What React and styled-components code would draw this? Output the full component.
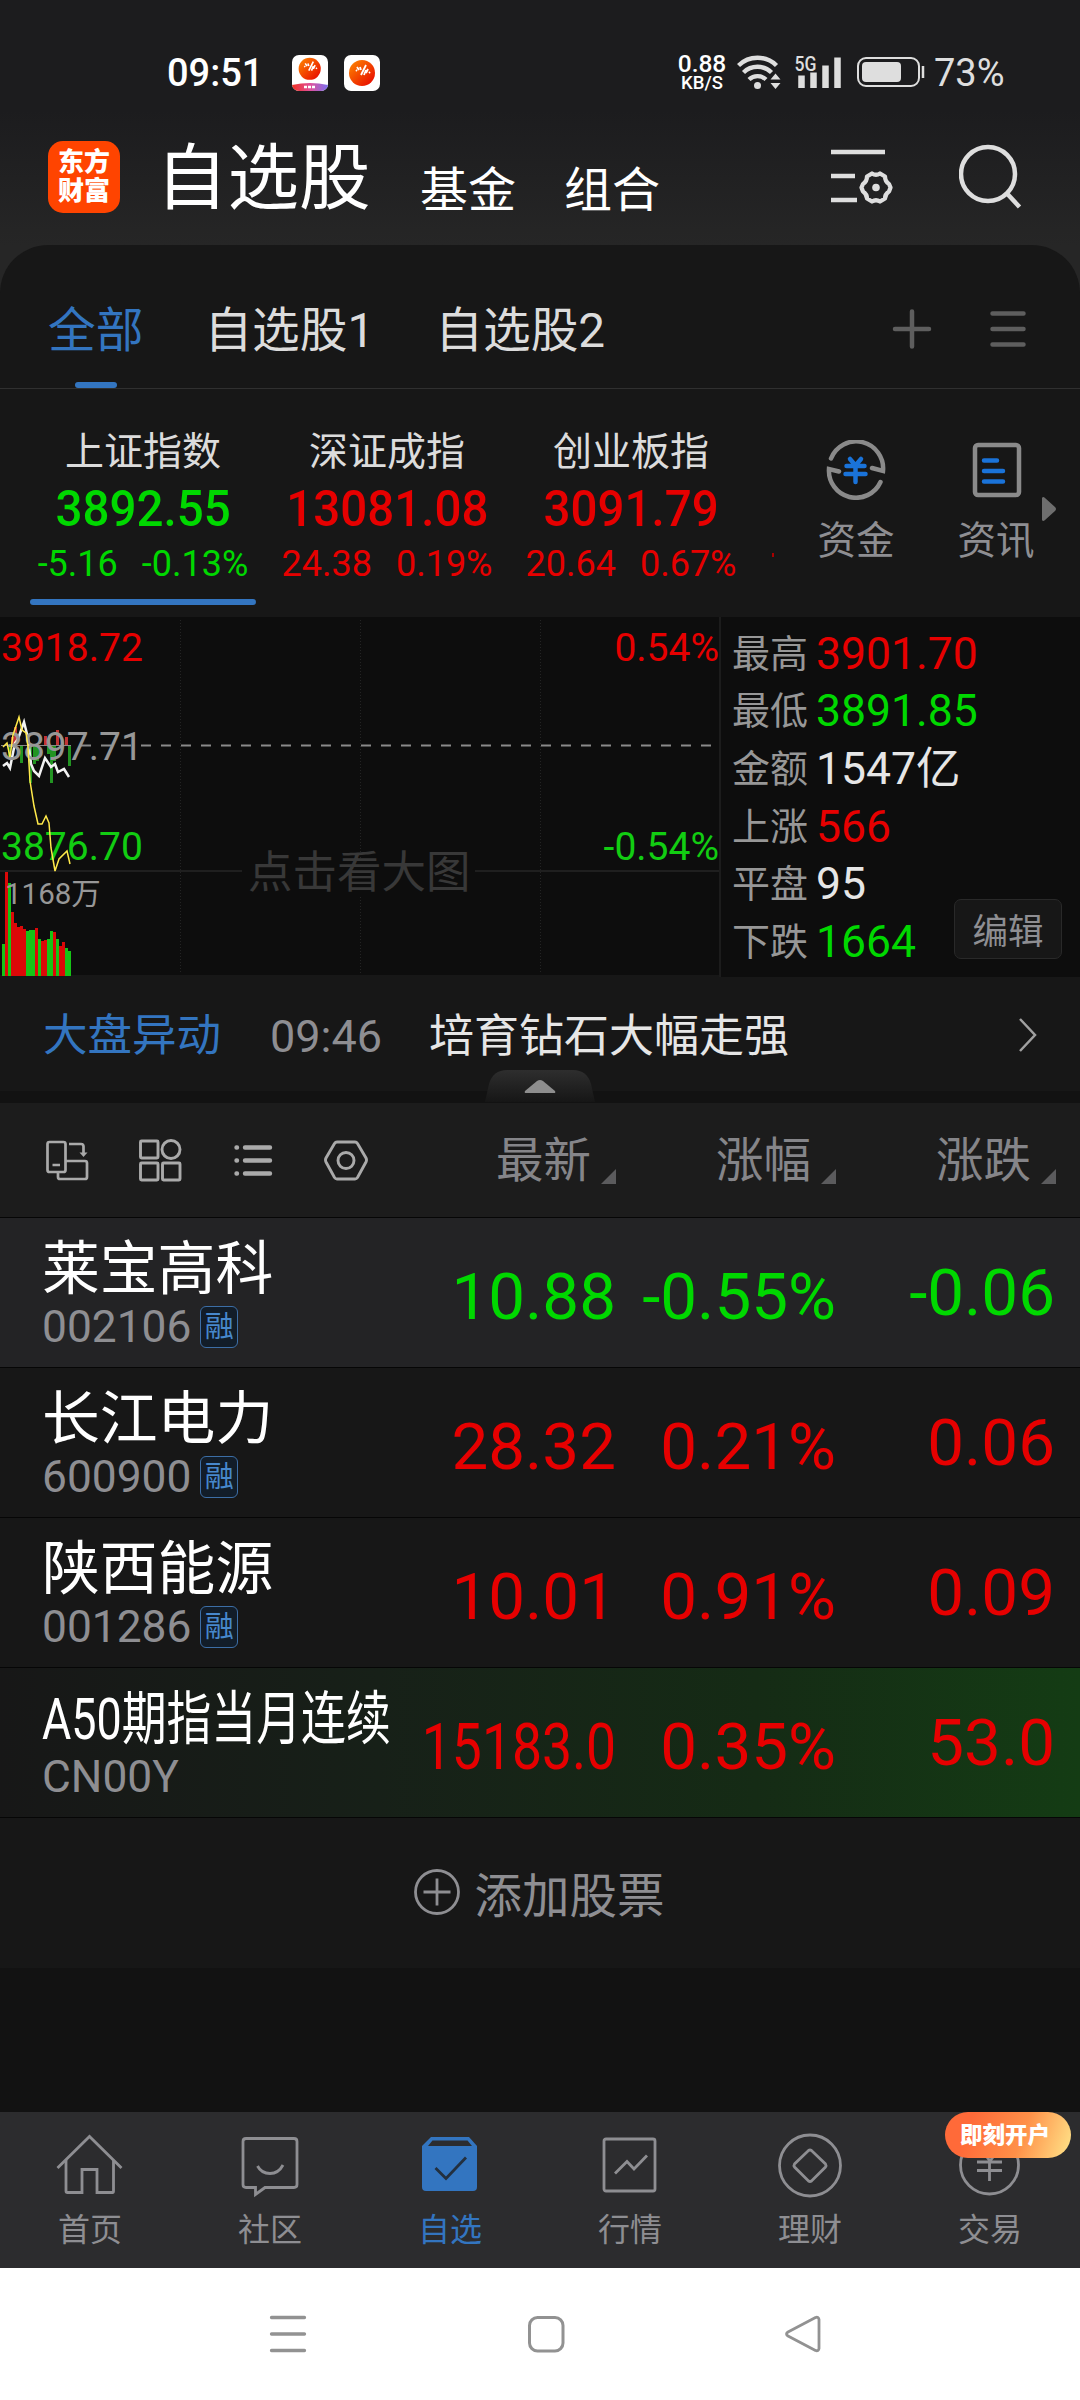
import React from 'react';
import styled, { createGlobalStyle } from 'styled-components';

const RED = '#e60000';
const GREEN = '#00d800';
const BLUE = '#3375c0';
const GREY = '#8e8e92';

const GlobalStyle = createGlobalStyle`
  * {
    box-sizing: border-box;
  }
  body {
    margin: 0;
    background: #121212;
    font-family: Roboto, 'Noto Sans CJK SC', sans-serif;
  }
  svg {
    display: block;
    flex: none;
  }
`;

const Screen = styled.div`
  width: 1080px;
  height: 2400px;
  display: flex;
  flex-direction: column;
  overflow: hidden;
  background: #121212;
  white-space: nowrap;
`;

// Header
const Top = styled.div`
  height: 292px;
  margin-bottom: -47px;
  flex: none;
  background: linear-gradient(#1c1c1e 110px, #262626 245px);
`;

const StatusBar = styled.div`
  height: 110px;
  padding: 35px 73px 0 167px;
  display: flex;
  align-items: center;
  color: #fff;
`;

const Clock = styled.div`
  width: 125px;
  font-size: 38px;
  font-weight: 500;
`;

const Badges = styled.div`
  display: flex;
  gap: 16px;
`;

const NetSpeed = styled.div`
  margin: 0 9px 0 auto;
  width: 52px;
  display: flex;
  flex-direction: column;
  align-items: center;
  font-size: 24.5px;
  line-height: 20px;
  font-weight: 500;

  small {
    font-size: 18.5px;
    line-height: 18px;
  }
`;

const Battery = styled.div`
  margin-left: 8px;
  width: 73px;
  font-size: 38px;
  color: #dedede;
`;

const TitleBar = styled.div`
  height: 135px;
  padding: 0 57px 0 48px;
  display: flex;
  align-items: center;
`;

const Logo = styled.div`
  width: 72px;
  height: 72px;
  margin-top: -1px;
  border-radius: 15px;
  background: #ff4400;
  color: #fff;
  font-size: 26px;
  line-height: 29px;
  font-weight: 900;
  text-align: center;
  padding-top: 7px;
`;

const Title = styled.div`
  margin: 3px 0 0 36px;
  width: 217px;
  color: #fff;
  font-size: 71.5px;
  line-height: 80px;
`;

const TitleLink = styled.div`
  margin: 26px 0 0 47px;
  width: 97px;
  color: #fff;
  font-size: 48px;
  line-height: 56px;
`;

const TitleIcons = styled.div`
  display: flex;
  align-items: flex-end;
  gap: 65px;
  margin: -1px 0 0 auto;
`;

// Watchlist groups
const Panel = styled.div`
  height: 372px;
  flex: none;
  border-radius: 48px 48px 0 0;
  background: #171717;
`;

const GroupTabs = styled.div`
  height: 144px;
  padding: 0 54px 0 48px;
  display: flex;
  align-items: center;
  border-bottom: 1px solid #303030;
`;

const GroupTab = styled.div`
  position: relative;
  height: 143px;
  margin-right: 61px;
  font-size: 47.7px;
  line-height: 173px;
  color: ${(p) => (p.$active ? BLUE : '#dcdcdc')};

  &::after {
    content: '';
    display: ${(p) => (p.$active ? 'block' : 'none')};
    position: absolute;
    left: 27px;
    bottom: 0;
    width: 42px;
    height: 6px;
    border-radius: 3px;
    background: ${BLUE};
  }
`;

const GroupActions = styled.div`
  display: flex;
  align-items: center;
  gap: 58px;
  margin: 24px 0 0 auto;
`;

// Index strip
const IndexStrip = styled.div`
  height: 228px;
  padding-left: 21px;
  display: flex;
`;

const IndexCell = styled.div`
  position: relative;
  width: 244px;
  padding-top: 36px;
  display: flex;
  flex-direction: column;
  align-items: center;
  color: ${(p) => p.$color};

  &::after {
    content: '';
    display: ${(p) => (p.$active ? 'block' : 'none')};
    position: absolute;
    left: 9px;
    bottom: 12px;
    width: 226px;
    height: 6px;
    border-radius: 3px;
    background: ${BLUE};
  }
`;

const IndexName = styled.div`
  color: #dcdcdc;
  font-size: 39px;
  line-height: 54px;
`;

const IndexValue = styled.div`
  font-size: 50px;
  line-height: 60px;
  font-weight: 500;
  transform: scaleX(0.95);
`;

const IndexChange = styled.div`
  display: flex;
  gap: 24px;
  font-size: 36px;
  line-height: 51px;
`;

const Peek = styled.div`
  width: 2px;
  height: 4px;
  margin: 164px 0 0 19px;
  background: #a00;
`;

const Shortcut = styled.div`
  width: 140px;
  padding-top: 51px;
  display: flex;
  flex-direction: column;
  align-items: center;
  gap: 15px;
  color: ${GREY};
  font-size: 38.5px;
  line-height: 52px;
`;

const Shortcuts = styled.div`
  display: flex;
  margin-left: 12px;
`;

const MoreArrow = styled.div`
  margin: 107px 0 0 -25px;
`;

// Minute chart
const ChartRow = styled.div`
  height: 360px;
  flex: none;
  display: flex;
  background: #0d0d0d;
`;

const Stats = styled.div`
  position: relative;
  flex: 1;
  padding: 8px 0 0 11px;
  border-left: 2px solid #1c1c1c;
`;

const Stat = styled.div`
  height: 57.6px;
  display: flex;
  align-items: center;
  color: ${(p) => p.$color};
  font-size: 44.5px;
  line-height: 56px;

  span {
    width: 84px;
    font-size: 38px;
    color: #979797;
  }
`;

const EditButton = styled.button`
  position: absolute;
  right: 18px;
  bottom: 18px;
  width: 108px;
  height: 60px;
  padding: 0 0 2px;
  border: 1px solid #292929;
  border-radius: 7px;
  background: #171717;
  color: ${GREY};
  font: inherit;
  font-size: 35.5px;
`;

// News ticker
const Ticker = styled.div`
  position: relative;
  height: 126px;
  flex: none;
  padding: 0 43px;
  display: flex;
  background: #171717;
  border-bottom: 12px solid #121212;
  font-size: 45px;
  line-height: 119px;
`;

const TickerLabel = styled.div`
  width: 227px;
  font-size: 44.5px;
  color: ${BLUE};
`;

const TickerTime = styled.div`
  width: 159px;
  color: ${GREY};
`;

const TickerText = styled.div`
  color: #e6e6e6;
`;

const TickerArrow = styled.div`
  margin: 41px 0 0 auto;
`;

const Handle = styled.div`
  position: absolute;
  left: 485px;
  bottom: -11px;
`;

// Quote list
const ListHead = styled.div`
  height: 114px;
  flex: none;
  display: grid;
  grid-template-columns: 396px 220px 220px 220px;
  align-items: center;
  background: #1c1c1c;
`;

const Tools = styled.div`
  display: flex;
  gap: 49px;
  padding-left: 45px;
`;

const ColumnTitle = styled.div`
  display: flex;
  justify-content: flex-end;
  align-items: flex-end;
  gap: 10px;
  padding-top: 2px;
  font-size: 47.5px;
  line-height: 60px;
  color: #858589;

  svg {
    margin-bottom: 7px;
  }
`;

const Row = styled.div`
  height: 150px;
  flex: none;
  padding-left: 42px;
  display: grid;
  grid-template-columns: 354px 220px 220px 219px;
  border-top: 1px solid #060606;
  background: ${(p) => p.$background || '#171717'};
`;

const Name = styled.div`
  margin-top: 13px;
  color: #fff;
  font-size: 57.8px;
  line-height: 76px;
  transform: scaleX(${(p) => p.$squeeze || 1});
  transform-origin: left;
`;

const Code = styled.div`
  display: flex;
  align-items: center;
  gap: 9px;
  margin-top: -4px;
  height: 48px;
  color: ${GREY};
  font-size: 44.3px;
`;

const Tag = styled.div`
  width: 38px;
  height: 42px;
  border: 1px solid #3c6ea6;
  border-radius: 6px;
  background: #121d29;
  color: #4788cc;
  font-size: 29px;
  line-height: 41px;
  text-align: center;
`;

const Figure = styled.div`
  justify-self: end;
  padding-top: ${(p) => p.$top || 39}px;
  color: ${(p) => p.$color};
  font-size: 65.5px;
  line-height: 80px;
  transform: scaleX(${(p) => p.$squeeze || 1});
  transform-origin: right;
`;

const AddRow = styled.div`
  height: 151px;
  flex: none;
  display: flex;
  align-items: center;
  justify-content: center;
  gap: 15px;
  padding: 0 2px 2px 0;
  border-top: 1px solid #060606;
  background: #171717;
  color: ${GREY};
  font-size: 47.5px;
`;

// Bottom bars
const TabBar = styled.div`
  height: 156px;
  flex: none;
  margin-top: auto;
  display: grid;
  grid-template-columns: repeat(6, 180px);
  background: #2c2c2e;
`;

const TabItem = styled.div`
  position: relative;
  padding-top: 20px;
  display: flex;
  flex-direction: column;
  align-items: center;
  color: ${(p) => (p.$active ? BLUE : GREY)};
  font-size: 32px;
  line-height: 44px;
  gap: 10px;
`;

const Promo = styled.div`
  position: absolute;
  top: 0;
  left: 45px;
  width: 126px;
  height: 46px;
  padding-left: 15px;
  border-radius: 23px;
  background: linear-gradient(110deg, #ff6a39 20%, #ff9048 60%, #ffe58a);
  color: #fff;
  font-size: 22.5px;
  line-height: 47px;
  font-weight: 900;
`;

const SystemBar = styled.div`
  height: 132px;
  flex: none;
  padding: 0 258px;
  display: flex;
  align-items: center;
  justify-content: space-between;
  background: #fff;
`;

const AppBadge = ({ promo }) => (
  <svg width="36" height="36" viewBox="0 0 36 36">
    <defs>
      <linearGradient id="ball" x1="0" y1="0" x2="1" y2="1">
        <stop offset="0" stopColor="#ff8a00" />
        <stop offset="1" stopColor="#e60000" />
      </linearGradient>
      <linearGradient id="strip">
        <stop offset="0" stopColor="#f03020" />
        <stop offset="0.5" stopColor="#e0509a" />
        <stop offset="1" stopColor="#7a70f0" />
      </linearGradient>
      <clipPath id="tile">
        <rect width="36" height="36" rx="7" />
      </clipPath>
    </defs>
    <rect width="36" height="36" rx="7" fill="#fff" />
    {promo && <path d="M0 30q18-4 36 0v6H0z" fill="url(#strip)" clipPath="url(#tile)" />}
    {promo && <path d="M12 32h12" stroke="#fff" strokeWidth="2.5" strokeDasharray="3 1" />}
    <g transform={promo ? 'translate(1.5 -1.5) scale(.9)' : 'translate(0 1)'}>
      <circle cx="18" cy="17" r={promo ? 12.3 : 13} fill="url(#ball)" />
      <path d="M13 11l2 3M16 11l1 3M17 19l5-10M22 17l2-4M12 14l1 1M25 17l1-1M20 19l2-5" stroke="#fff" strokeWidth="1.8" />
    </g>
  </svg>
);

const SignalIcons = () => (
  <svg width="189" height="46" viewBox="0 -4 189 46" fill="none" stroke="#dedede">
    <g strokeWidth="4.4">
      <path d="M1.5 11.5a27 27 0 0 1 38 0" />
      <path d="M6.5 18.5a20 20 0 0 1 28 0" />
      <path d="M12 25.5a12.5 12.5 0 0 1 17 0" />
    </g>
    <circle cx="20.5" cy="31.5" r="3.5" fill="#dedede" stroke="none" />
    <path d="M33.5 25.5l5-6 5 6zM33.5 29l5 6 5-6z" fill="#dedede" stroke="none" />
    <path d="M64.5 34V21.5M76.5 34V18.5M88.5 34V11.5M100.5 34V3.5" strokeWidth="6.5" />
    <text x="57.5" y="16.5" fill="#dedede" stroke="none" fontSize="20.5" fontWeight="500" textLength="22" lengthAdjust="spacingAndGlyphs">5G</text>
    <rect x="121" y="4" width="61" height="28" rx="8" strokeWidth="2" />
    <rect x="125" y="8" width="39" height="20" rx="4" fill="#dedede" stroke="none" />
    <path d="M186 12v12" strokeWidth="2.5" />
  </svg>
);

const FilterIcon = () => (
  <svg width="63" height="62" viewBox="0 0 63 62" fill="none" stroke="#dedede" strokeWidth="4.5">
    <path d="M0 4h54M0 28h24M0 52h26" />
    <path d="M41 25.5q4 2.5 8 0l5 3q0 5 4 7.5l1.5 3.5-1.5 4q-4 2.5-4 7l-5 3q-4-2.5-8 0l-5-3q0-4.500-4-7l-1.5-4 1.5-3.5q4-2.5 4-7.5z" strokeLinejoin="round" strokeWidth="4.3" />
    <circle cx="45" cy="39.5" r="3.8" fill="#dedede" stroke="none" />
  </svg>
);

const SearchIcon = () => (
  <svg width="64" height="66" viewBox="0 0 64 66" fill="none" stroke="#dedede" strokeWidth="4.5">
    <circle cx="29" cy="30" r="27" />
    <path d="M48 49.5l12.5 13.5" />
  </svg>
);

const FundIcon = () => (
  <svg width="60" height="60" viewBox="0 0 60 60" fill="none" stroke="#8a8a8a" strokeWidth="4.5" strokeLinecap="round">
    <path d="M5 18.5A27 27 0 0 1 57 31l-11-3" />
    <path d="M54.5 42A27 27 0 0 1 3 29l10 2.5" />
    <path d="M24 19l5.5 6.5L35 19M20.5 26h18M19.5 34h20M29.5 26v16" stroke="#1a73d9" />
  </svg>
);

const NewsIcon = () => (
  <svg width="60" height="60" viewBox="0 0 60 60" fill="none" stroke="#8a8a8a" strokeWidth="4.5" strokeLinecap="round">
    <rect x="9" y="5" width="44" height="50" rx="3" />
    <path d="M18 20.5h13M18 31h19M18 41.5h19" stroke="#1a73d9" />
  </svg>
);

// [height, colour] per minute, drawn upwards from the bottom edge
const VOLUMES = [
  [32, 'g'], [104, 'r'], [93, 'g'], [64, 'r'], [53, 'r'], [49, 'r'], [50, 'r'], [47, 'r'],
  [45, 'g'], [46, 'g'], [46, 'g'], [48, 'r'], [37, 'g'], [35, 'r'], [36, 'r'], [37, 'g'],
  [45, 'g'], [44, 'r'], [37, 'g'], [30, 'r'], [34, 'r'], [28, 'g'], [25, 'g'],
];

const MinuteChart = () => (
  <svg width="719" height="360" viewBox="0 0 719 360" fontFamily="Roboto, 'Noto Sans CJK SC', sans-serif" fontSize="39">
    <path d="M180.5 3v354M360.5 3v241M360.5 280v77M540.5 3v354" stroke="#242424" strokeDasharray="1 2" />
    <path d="M0 254h242M475 254h244" stroke="#1f1f1f" strokeWidth="2" />
    <path d="M0 359h719" stroke="#171717" strokeWidth="2" />
    <path d="M81 128.5h636" stroke="#8a8a8a" strokeWidth="2" strokeDasharray="10 10" />
    <path d="M12.5 128v-8M15.5 128v-18M45.5 128v-9M57.5 128v-15M66.5 128v-8" stroke="#c33434" strokeWidth="3" />
    <path d="M9.5 128v14M21.5 128v18M30.5 128v38M34.5 128v19M37.5 128v16M48.5 128v9M51.5 128v38M54.5 128v16M69.5 128v21" stroke="#229422" strokeWidth="3" />
    <path d="M1 128.5h70" stroke="#888" />
    {VOLUMES.map(([h, c], i) => (
      <rect key={i} x={2 + i * 3} y={359 - h} width="3" height={h} fill={c === 'r' ? '#dc0808' : '#16c416'} />
    ))}
    <path d="M3 149l4-3 3 5 5-25 3-4 6-17 4 16 3 26 3 7 5 5 6-18 6 9 4-3 3 8 6-3 5 8" fill="none" stroke="#f2f2f2" strokeWidth="2.5" />
    <text x="1" y="44" fill={RED}>3918.72</text>
    <text x="1" y="143" fill="#979797">3897.71</text>
    <text x="1" y="243" fill="#12cd12">3876.70</text>
    <text x="719" y="44" fill={RED} textAnchor="end">0.54%</text>
    <text x="719" y="243" fill="#12cd12" textAnchor="end">-0.54%</text>
    <text x="5" y="287" fill="#979797" fontSize="29.5">1168万</text>
    <path d="M3 130l4-4 3 14 3-22 6-18 3 13 4 3 2 14 2 34 4 25 4 18h4l4-8 3 7 2 25 4 23 4-12 8-8 3 13" fill="none" stroke="#ffe94a" strokeWidth="1.5" />
    <text x="248" y="271" fill="#383838" fontSize="44.5">点击看大图</text>
  </svg>
);

const ToolIcons = () => (
  <>
    <svg width="44" height="44" viewBox="0 0 44 44" fill="none" stroke="#aaa" strokeWidth="2.7">
      <rect x="2.5" y="4" width="18" height="30" rx="2" />
      <path d="M7.5 27h7.5M13 34v5q0 2 2 2h25q2 0 2-2V25q0-2-2-2H21M24 6h12q2.5 0 2.5 2.5V17" />
      <path d="M34.5 14.5h8l-4 4.5z" fill="#aaa" stroke="none" />
    </svg>
    <svg width="44" height="44" viewBox="0 0 44 44" fill="none" stroke="#aaa" strokeWidth="2.9">
      <rect x="2.5" y="3" width="17.5" height="17" rx="1" />
      <circle cx="33" cy="11.5" r="9" />
      <rect x="2.5" y="25" width="17.5" height="17" rx="1" />
      <rect x="24.5" y="25" width="17.5" height="17" rx="1" />
    </svg>
    <svg width="44" height="44" viewBox="0 0 44 44" stroke="#aaa" strokeWidth="4.4" strokeLinecap="round">
      <path d="M5.5 9.5h.5M14 9.5h25M5.5 22.5h.5M14 22.5h25M5.5 35.5h.5M14 35.5h25" />
    </svg>
    <svg width="44" height="44" viewBox="0 0 44 44" fill="none" stroke="#aaa" strokeWidth="2.9">
      <path d="M13 4h18q1.5 0 2.5 1.5L42 20q1 2 0 4l-8.5 15.5q-1 1.5-2.5 1.5H13q-1.5 0-2.5-1.5L2 24q-1-2 0-4l8.5-14.5Q11.5 4 13 4z" />
      <circle cx="22" cy="22.5" r="8" />
    </svg>
  </>
);

const TAB_ICONS = {
  home: (
    <>
      <path d="M2.5 36l32-31.500 32 31.500" />
      <path d="M11 28v31q0 1.5 1.5 1.5H27V37.5h15v23h15.5q1 0 1-1.5V28" />
    </>
  ),
  community: (
    <>
      <path d="M11 6.5h48q3 0 3 3v43q0 3-3 3H30l-9.5 7V55.5H11q-3 0-3-3v-43q0-3 3-3z" />
      <path d="M22.5 34q4 7.5 12.5 7.5T48 33" />
    </>
  ),
  watch: (
    <>
      <path d="M16 5h38l8 9v41q0 4-4 4H11q-4 0-4-4V14z" fill={BLUE} stroke="none" />
      <path d="M17.5 8.5h35l4.5 5.5H13z" fill="#2c2c2e" stroke="none" />
      <path d="M20.5 36L31 46.5l20-21" stroke="#23303f" />
    </>
  ),
  market: (
    <>
      <rect x="9" y="7" width="51" height="52" rx="2" />
      <path d="M20 41.5l12-12 7 7.5 13-13.5" />
    </>
  ),
  wealth: (
    <>
      <circle cx="35" cy="33.5" r="30.5" />
      <path d="M33.5 18.5q1.5-1 3 0l14 13.5q1 1.5 0 3l-14 14q-1.5 1-3 0l-14-14q-1-1.5 0-3z" />
    </>
  ),
  trade: (
    <>
      <circle cx="34.5" cy="33" r="29" />
      <path d="M25 16l10 13 10-13M22 30h25M22 38.5h25M34.5 29v20" />
    </>
  ),
};

const TABS = [
  ['home', '首页'], ['community', '社区'], ['watch', '自选'],
  ['market', '行情'], ['wealth', '理财'], ['trade', '交易'],
];

const INDEXES = [
  { name: '上证指数', value: '3892.55', diff: '-5.16', pct: '-0.13%', color: GREEN },
  { name: '深证成指', value: '13081.08', diff: '24.38', pct: '0.19%', color: RED },
  { name: '创业板指', value: '3091.79', diff: '20.64', pct: '0.67%', color: RED },
];

const STATS = [
  ['最高', '3901.70', RED], ['最低', '3891.85', GREEN], ['金额', '1547亿', '#e6e6e6'],
  ['上涨', '566', RED], ['平盘', '95', '#e6e6e6'], ['下跌', '1664', GREEN],
];

const STOCKS = [
  { name: '莱宝高科', code: '002106', tag: true, price: '10.88', pct: '-0.55%', diff: '-0.06', color: GREEN, background: '#232325' },
  { name: '长江电力', code: '600900', tag: true, price: '28.32', pct: '0.21%', diff: '0.06', color: RED },
  { name: '陕西能源', code: '001286', tag: true, price: '10.01', pct: '0.91%', diff: '0.09', color: RED },
  {
    name: 'A50期指当月连续', code: 'CN00Y', price: '15183.0', pct: '0.35%', diff: '53.0', color: RED,
    background: 'linear-gradient(90deg, #171717, #172018 35%, #152b15 70%, #143c14)', nameSqueeze: 0.776, priceSqueeze: 0.816,
  },
];

const App = () => (
  <Screen>
    <GlobalStyle />
    <Top>
      <StatusBar>
        <Clock>09:51</Clock>
        <Badges>
          <AppBadge promo />
          <AppBadge />
        </Badges>
        <NetSpeed>0.88<small>KB/S</small></NetSpeed>
        <SignalIcons />
        <Battery>73%</Battery>
      </StatusBar>
      <TitleBar>
        <Logo>东方<br />财富</Logo>
        <Title>自选股</Title>
        <TitleLink>基金</TitleLink>
        <TitleLink>组合</TitleLink>
        <TitleIcons>
          <FilterIcon />
          <SearchIcon />
        </TitleIcons>
      </TitleBar>
    </Top>

    <Panel>
      <GroupTabs>
        <GroupTab $active>全部</GroupTab>
        <GroupTab>自选股1</GroupTab>
        <GroupTab>自选股2</GroupTab>
        <GroupActions>
          <svg width="40" height="40" stroke="#5e5e5e" strokeWidth="4.5" strokeLinecap="round">
            <path d="M3 20h34M20 2.5v35" />
          </svg>
          <svg width="36" height="40" stroke="#5e5e5e" strokeWidth="4.5" strokeLinecap="round">
            <path d="M2.5 4.5h31M2.5 20h31M2.5 35.5h31" />
          </svg>
        </GroupActions>
      </GroupTabs>
      <IndexStrip>
        {INDEXES.map((item, i) => (
          <IndexCell key={item.name} $color={item.color} $active={i === 0}>
            <IndexName>{item.name}</IndexName>
            <IndexValue>{item.value}</IndexValue>
            <IndexChange>
              <span>{item.diff}</span>
              <span>{item.pct}</span>
            </IndexChange>
          </IndexCell>
        ))}
        <Peek />
        <Shortcuts>
          <Shortcut><FundIcon />资金</Shortcut>
          <Shortcut><NewsIcon />资讯</Shortcut>
        </Shortcuts>
        <MoreArrow>
          <svg width="16" height="26">
            <path d="M1 2q1-2 3 0l10 9q2 2 0 4L4 24q-2 2-3 0z" fill="#6e6e6e" />
          </svg>
        </MoreArrow>
      </IndexStrip>
    </Panel>

    <ChartRow>
      <MinuteChart />
      <Stats>
        {STATS.map(([label, value, color]) => (
          <Stat key={label} $color={color}><span>{label}</span>{value}</Stat>
        ))}
        <EditButton>编辑</EditButton>
      </Stats>
    </ChartRow>

    <Ticker>
      <TickerLabel>大盘异动</TickerLabel>
      <TickerTime>09:46</TickerTime>
      <TickerText>培育钻石大幅走强</TickerText>
      <TickerArrow>
        <svg width="18" height="34" fill="none" stroke="#a0a0a0" strokeWidth="2.5">
          <path d="M1 1l15 16L1 33" />
        </svg>
      </TickerArrow>
      <Handle>
        <svg width="110" height="32">
          <defs>
            <linearGradient id="handle" x2="0" y2="1">
              <stop offset="0" stopColor="#2e2e2e" />
              <stop offset="1" stopColor="#161616" />
            </linearGradient>
          </defs>
          <path d="M0 32L4 14Q8 0 22 0h66q14 0 18 14l4 18z" fill="url(#handle)" />
          <path d="M40 21l12-10q3-2 6 0l12 10q1 2-1 2H41q-2 0-1-2z" fill="#8e8e8e" />
        </svg>
      </Handle>
    </Ticker>

    <ListHead>
      <Tools><ToolIcons /></Tools>
      {['最新', '涨幅', '涨跌'].map((title) => (
        <ColumnTitle key={title}>
          {title}
          <svg width="15" height="15">
            <path d="M15 0v15H0z" fill="#5b5b5d" />
          </svg>
        </ColumnTitle>
      ))}
    </ListHead>

    {STOCKS.map((stock) => (
      <Row key={stock.code} $background={stock.background}>
        <div>
          <Name $squeeze={stock.nameSqueeze}>{stock.name}</Name>
          <Code>
            {stock.code}
            {stock.tag && <Tag>融</Tag>}
          </Code>
        </div>
        <Figure $color={stock.color} $squeeze={stock.priceSqueeze}>{stock.price}</Figure>
        <Figure $color={stock.color}>{stock.pct}</Figure>
        <Figure $color={stock.color} $top={35}>{stock.diff}</Figure>
      </Row>
    ))}

    <AddRow>
      <svg width="46" height="46" fill="none" stroke={GREY} strokeWidth="2.8">
        <circle cx="23" cy="23" r="21.5" />
        <path d="M9.5 23h27M23 9.5v27" />
      </svg>
      添加股票
    </AddRow>

    <TabBar>
      {TABS.map(([id, label]) => (
        <TabItem key={id} $active={id === 'watch'}>
          <svg width="70" height="66" viewBox="0 0 70 66" fill="none" stroke="currentColor" strokeWidth="2.8">
            {TAB_ICONS[id]}
          </svg>
          {label}
          {id === 'trade' && <Promo>即刻开户</Promo>}
        </TabItem>
      ))}
    </TabBar>

    <SystemBar>
      <svg width="60" height="40" stroke="#929292" strokeWidth="3.3" strokeLinecap="round">
        <path d="M13.5 3.5h33M13.5 20h33M13.5 36.5h33" />
      </svg>
      <svg width="60" height="40" fill="none" stroke="#929292" strokeWidth="3">
        <rect x="19.5" y="3.5" width="33.5" height="33.5" rx="8" />
      </svg>
      <svg width="60" height="40" fill="none" stroke="#929292" strokeWidth="2.8" strokeLinejoin="round">
        <path d="M53.5 3.5q3-1 3.5 2v29q-.5 3-3.5 2L26 22q-3-2 0-4z" />
      </svg>
    </SystemBar>
  </Screen>
);

export default App;
